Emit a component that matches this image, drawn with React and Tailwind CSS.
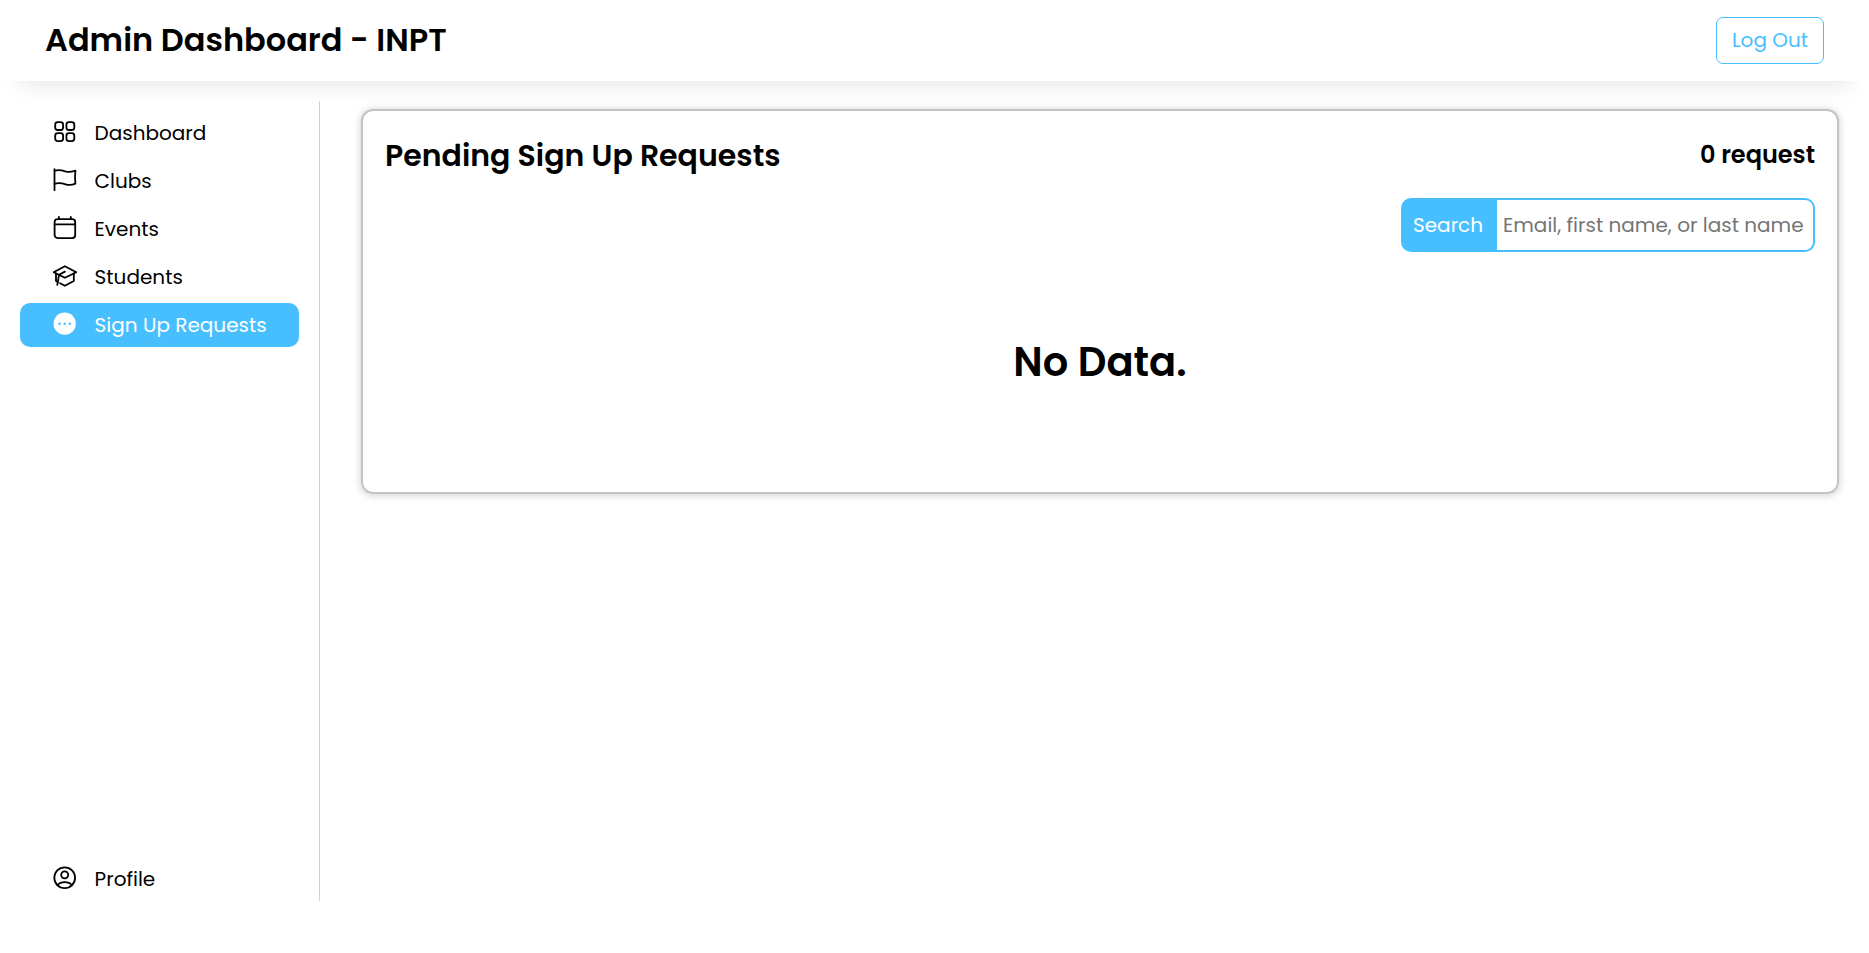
import React from "react";

const Icon = ({ children }) => (
  <svg
    viewBox="0 0 24 24"
    className="mb-0.5 size-6 shrink-0"
    fill="none"
    stroke="currentColor"
    strokeWidth="1.8"
    strokeLinecap="round"
    strokeLinejoin="round"
  >
    {children}
  </svg>
);

const GridIcon = () => (
  <Icon>
    <rect x="2.2" y="2.1" width="7.9" height="7.9" rx="2.5" />
    <rect x="13.4" y="2.1" width="7.9" height="7.9" rx="2.5" />
    <rect x="2.2" y="13.2" width="7.9" height="7.9" rx="2.5" />
    <rect x="13.4" y="13.2" width="7.9" height="7.9" rx="2.5" />
  </Icon>
);

const FlagIcon = () => (
  <Icon>
    <path d="M1.5 1.2V22.2" />
    <path d="M1.5 3C6.2 1 9.6 2.6 12.6 3.5C16 4.6 18.8 3.9 22.4 2.6Q21.6 9 22.4 15.6C19 17.2 16 17.4 12.6 16.3C9.4 15.2 6.2 14.2 1.5 15.8" />
  </Icon>
);

const CalendarIcon = () => (
  <Icon>
    <rect x="1.6" y="3.2" width="20.6" height="18.9" rx="3" />
    <path d="M1.6 8.4H22.2M5.9 .9V3.2M17.8 .9V3.2" />
  </Icon>
);

const GraduationIcon = () => (
  <Icon>
    <path d="M.6 8.2L11.9 2.2L23.3 8.2L11.9 13.8Z" />
    <path d="M20.8 9.5V17L11.9 21.8L7 19.2M3 9.5V17L4.8 18" />
    <path d="M11.9 7.6L6 10.7L4.3 20.8" />
  </Icon>
);

const MoreIcon = () => (
  <Icon>
    <circle cx="11.7" cy="11.7" r="11.1" fill="white" stroke="none" />
    <g fill="#47bfff" stroke="none">
      <circle cx="6.5" cy="11.7" r="1.25" />
      <circle cx="11.7" cy="11.7" r="1.25" />
      <circle cx="16.9" cy="11.7" r="1.25" />
    </g>
  </Icon>
);

const ProfileIcon = () => (
  <Icon>
    <circle cx="11.7" cy="11.8" r="10.4" />
    <circle cx="11.7" cy="8.8" r="3.5" />
    <path d="M4.4 19.2C7.8 15 15.6 15 19 19.2" />
  </Icon>
);

const links = [
  { label: "Dashboard", icon: GridIcon },
  { label: "Clubs", icon: FlagIcon },
  { label: "Events", icon: CalendarIcon },
  { label: "Students", icon: GraduationIcon },
  { label: "Sign Up Requests", icon: MoreIcon, active: true },
];

function NavLink({ label, icon: Glyph, active }) {
  return (
    <a
      className={`flex h-11 items-center gap-[17.6px] rounded-[10px] pl-[33px] text-xl ${
        active ? "bg-[#47bfff] text-white" : "text-black"
      }`}
    >
      <Glyph />
      <span>{label}</span>
    </a>
  );
}

export default function App() {
  return (
    <div className="min-h-screen bg-white font-[Poppins,Inter,sans-serif] text-black">
      <header className="flex h-[81px] items-center justify-between px-[45px] shadow-[0_22px_25px_-20px_rgba(0,0,0,0.12)]">
        <h1 className="pb-0.5 text-[32px] font-semibold">Admin Dashboard - INPT</h1>
        <button className="h-[47px] w-[108px] rounded-[7px] border border-[#47bfff] pb-px text-xl text-[#47bfff]">
          Log Out
        </button>
      </header>

      <div className="flex pt-5">
        <aside className="flex h-[800px] w-80 shrink-0 flex-col justify-between border-r border-[#d0d0d0] pt-[10px] pr-5 pl-5">
          <nav className="flex flex-col gap-1">
            {links.map((link) => (
              <NavLink key={link.label} {...link} />
            ))}
          </nav>
          <NavLink label="Profile" icon={ProfileIcon} />
        </aside>

        <main className="flex-1 pt-2 pr-[30px] pl-[41px]">
          <section className="h-[385px] rounded-xl border-2 border-[#c3c3c3] px-[22px] pt-[21px] shadow-[0_1px_8px_rgba(0,0,0,0.2)]">
            <div className="flex items-center justify-between">
              <h2 className="text-[30px] leading-[48px] font-semibold">Pending Sign Up Requests</h2>
              <p className="pb-[2px] text-2xl font-semibold">0 request</p>
            </div>
            <div className="mt-[18px] flex justify-end">
              <div className="flex h-[54px] w-[414px] overflow-hidden rounded-[10px] border-2 border-[#47bfff] bg-[#47bfff]">
                <button className="w-[94px] pr-1 text-xl text-white">Search</button>
                <input
                  className="min-w-0 flex-1 bg-white pl-[6px] text-xl outline-none placeholder:text-[#757575]"
                  placeholder="Email, first name, or last name"
                />
              </div>
            </div>
            <p className="mt-[80px] text-center text-[40px] leading-[60px] font-semibold">No Data.</p>
          </section>
        </main>
      </div>
    </div>
  );
}
